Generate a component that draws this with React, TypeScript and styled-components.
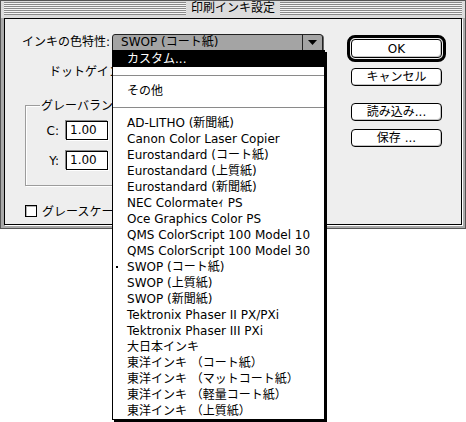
import React from "react";
import styled, { createGlobalStyle } from "styled-components";

const FONT = `"DejaVu Sans", "Noto Sans CJK JP", sans-serif`;

const GlobalStyle = createGlobalStyle`
  html, body {
    margin: 0;
    padding: 0;
    background: #ffffff;
  }
  body {
    font-family: ${FONT};
    font-size: 12px;
    color: #000;
  }
`;

type MenuEntry = {
  label?: string;
  separator?: boolean;
  checked?: boolean;
  highlighted?: boolean;
};

const menuEntries: MenuEntry[] = [
  { label: "カスタム...", highlighted: true },
  { separator: true },
  { label: "その他" },
  { separator: true },
  { label: "AD-LITHO (新聞紙)" },
  { label: "Canon Color Laser Copier" },
  { label: "Eurostandard (コート紙)" },
  { label: "Eurostandard (上質紙)" },
  { label: "Eurostandard (新聞紙)" },
  { label: "NEC Colormateｨ PS" },
  { label: "Oce Graphics Color PS" },
  { label: "QMS ColorScript 100 Model 10" },
  { label: "QMS ColorScript 100 Model 30" },
  { label: "SWOP (コート紙)", checked: true },
  { label: "SWOP (上質紙)" },
  { label: "SWOP (新聞紙)" },
  { label: "Tektronix Phaser II PX/PXi" },
  { label: "Tektronix Phaser III PXi" },
  { label: "大日本インキ" },
  { label: "東洋インキ （コート紙）" },
  { label: "東洋インキ （マットコート紙）" },
  { label: "東洋インキ （軽量コート紙）" },
  { label: "東洋インキ （上質紙）" },
];

function App() {
  return (
    <>
      <GlobalStyle />
      <Page>
        <Window>
          <TitleBar>
            <Stripes />
            <Title>印刷インキ設定</Title>
            <Stripes />
          </TitleBar>
          <Content>
            <LeftColumn>
              <Row $indent={17} $top={15}>
                <Label>インキの色特性:</Label>
                <Popup>
                  <PopupButton>
                    <PopupText>SWOP (コート紙)</PopupText>
                    <PopupArrow>
                      <svg width="9" height="5" viewBox="0 0 9 5">
                        <polygon points="0,0 9,0 4.5,5" fill="#000" />
                      </svg>
                    </PopupArrow>
                  </PopupButton>
                  <Menu>
                    {menuEntries.map((entry, i) =>
                      entry.separator ? (
                        <MenuSeparator key={i} />
                      ) : (
                        <MenuItem
                          key={i}
                          $highlighted={entry.highlighted}
                          $checked={entry.checked}
                        >
                          {entry.label}
                        </MenuItem>
                      )
                    )}
                  </Menu>
                </Popup>
              </Row>
              <Row $indent={44} $top={13}>
                <Label>ドットゲイン補正:</Label>
              </Row>
              <GroupBox>
                <GroupLabel>グレーバランス</GroupLabel>
                <FieldRow $top={7}>
                  <FieldLabel>C:</FieldLabel>
                  <NumberField>1.00</NumberField>
                </FieldRow>
                <FieldRow $top={11}>
                  <FieldLabel>Y:</FieldLabel>
                  <NumberField>1.00</NumberField>
                </FieldRow>
              </GroupBox>
              <CheckRow>
                <CheckBox />
                <span>グレースケール</span>
              </CheckRow>
            </LeftColumn>
            <RightColumn>
              <DefaultRing>
                <Button $tall>OK</Button>
              </DefaultRing>
              <Button $top={6}>キャンセル</Button>
              <Button $top={17}>読み込み...</Button>
              <Button $top={8}>保存 ...</Button>
            </RightColumn>
          </Content>
        </Window>
      </Page>
    </>
  );
}

const Page = styled.div`
  width: 466px;
  height: 422px;
  background: #ffffff;
`;

const Window = styled.div`
  position: relative;
  width: 466px;
  height: 229px;
  box-sizing: border-box;
  border: 1px solid #555;
  background: #a9a9a9;
  display: flex;
  flex-direction: column;
`;

const TitleBar = styled.div`
  height: 17px;
  display: flex;
  align-items: center;
  gap: 3px;
  padding: 0 3px 2px 3px;
  box-sizing: border-box;
  background: #dcdcdc;
`;

const Stripes = styled.div`
  flex: 1;
  height: 13px;
  background: repeating-linear-gradient(
    to bottom,
    #8a8a8a 0px,
    #8a8a8a 1px,
    #f6f6f6 1px,
    #f6f6f6 2px
  );
`;

const Title = styled.div`
  padding: 0 2px;
  line-height: 15px;
  white-space: nowrap;
`;

const Content = styled.div`
  flex: 1;
  margin: 0 3px 3px 3px;
  border: 1px solid #000;
  box-shadow: 1px 1px 0 #fff;
  background: #eeeeee;
  display: flex;
`;

const LeftColumn = styled.div`
  flex: 1;
  display: flex;
  flex-direction: column;
  align-items: flex-start;
`;

const Row = styled.div<{ $indent: number; $top: number }>`
  display: flex;
  align-items: center;
  gap: 2px;
  height: 17px;
  margin-left: ${(p) => p.$indent}px;
  margin-top: ${(p) => p.$top}px;
  white-space: nowrap;
`;

const Label = styled.span`
  line-height: 17px;
`;

const Popup = styled.div`
  position: relative;
`;

const PopupButton = styled.div`
  width: 211px;
  height: 17px;
  box-sizing: border-box;
  border: 1px solid #222;
  border-radius: 3px 3px 0 0;
  background: #a4a4a4;
  box-shadow: 1px 1px 0 #666;
  display: flex;
`;

const PopupText = styled.span`
  flex: 1;
  padding-left: 8px;
  line-height: 15px;
  white-space: nowrap;
`;

const PopupArrow = styled.span`
  width: 19px;
  border-left: 1px solid #222;
  display: flex;
  align-items: center;
  justify-content: center;
`;

const Menu = styled.div`
  position: absolute;
  top: 16px;
  left: 0;
  z-index: 10;
  width: 213px;
  box-sizing: border-box;
  border: 1px solid #000;
  box-shadow: 2px 2px 0 #000;
  background: #fff;
`;

const MenuItem = styled.div<{ $highlighted?: boolean; $checked?: boolean }>`
  position: relative;
  height: 16px;
  line-height: 16px;
  padding-left: 14px;
  white-space: nowrap;
  background: ${(p) => (p.$highlighted ? "#000" : "transparent")};
  color: ${(p) => (p.$highlighted ? "#fff" : "#000")};

  &::before {
    content: "";
    display: ${(p) => (p.$checked ? "block" : "none")};
    position: absolute;
    left: 3px;
    top: 7px;
    width: 2px;
    height: 2px;
    background: #000;
  }
`;

const MenuSeparator = styled.div`
  height: 16px;
  display: flex;
  align-items: center;

  &::after {
    content: "";
    flex: 1;
    height: 1px;
    background: #8a8a8a;
  }
`;

const GroupBox = styled.div`
  margin: 24px 0 0 20px;
  width: 296px;
  height: 81px;
  box-sizing: border-box;
  border: 1px solid #9c9c9c;
  box-shadow: inset 1px 1px 0 #fff, 1px 1px 0 #fff;
  display: flex;
  flex-direction: column;
`;

const GroupLabel = styled.span`
  align-self: flex-start;
  margin: -8px 0 0 14px;
  padding: 0 1px;
  line-height: 16px;
  background: #eeeeee;
  white-space: nowrap;
`;

const FieldRow = styled.div<{ $top: number }>`
  display: flex;
  align-items: center;
  margin-top: ${(p) => p.$top}px;
`;

const FieldLabel = styled.span`
  width: 33px;
  margin-right: 7px;
  text-align: right;
`;

const NumberField = styled.div`
  width: 42px;
  height: 19px;
  box-sizing: border-box;
  padding-left: 3px;
  line-height: 17px;
  border: 1px solid #000;
  background: #fff;
  box-shadow: -1px -1px 0 #8a8a8a, 1px 1px 0 #fff;
`;

const CheckRow = styled.div`
  display: flex;
  align-items: center;
  gap: 5px;
  margin: 16px 0 0 20px;
  white-space: nowrap;
`;

const CheckBox = styled.span`
  width: 12px;
  height: 12px;
  box-sizing: border-box;
  border: 1px solid #000;
  background: #fff;
  box-shadow: inset 1px 1px 0 #b0b0b0;
`;

const RightColumn = styled.div`
  width: 99px;
  padding: 16px 15px 0 0;
  display: flex;
  flex-direction: column;
  align-items: center;
`;

const DefaultRing = styled.div`
  border: 3px solid #000;
  border-radius: 8px;
  padding: 1px;
  background: #eeeeee;
`;

const Button = styled.button<{ $top?: number; $tall?: boolean }>`
  display: block;
  width: 91px;
  height: ${(p) => (p.$tall ? 19 : 18)}px;
  margin: ${(p) => p.$top ?? 0}px 0 0 0;
  padding: 0;
  border: 1px solid #000;
  border-radius: 4px;
  background: #fff;
  box-shadow: inset -1px -1px 0 #c4c4c4;
  font-family: ${FONT};
  font-size: 12px;
  line-height: 16px;
  color: #000;
`;

export default App;
